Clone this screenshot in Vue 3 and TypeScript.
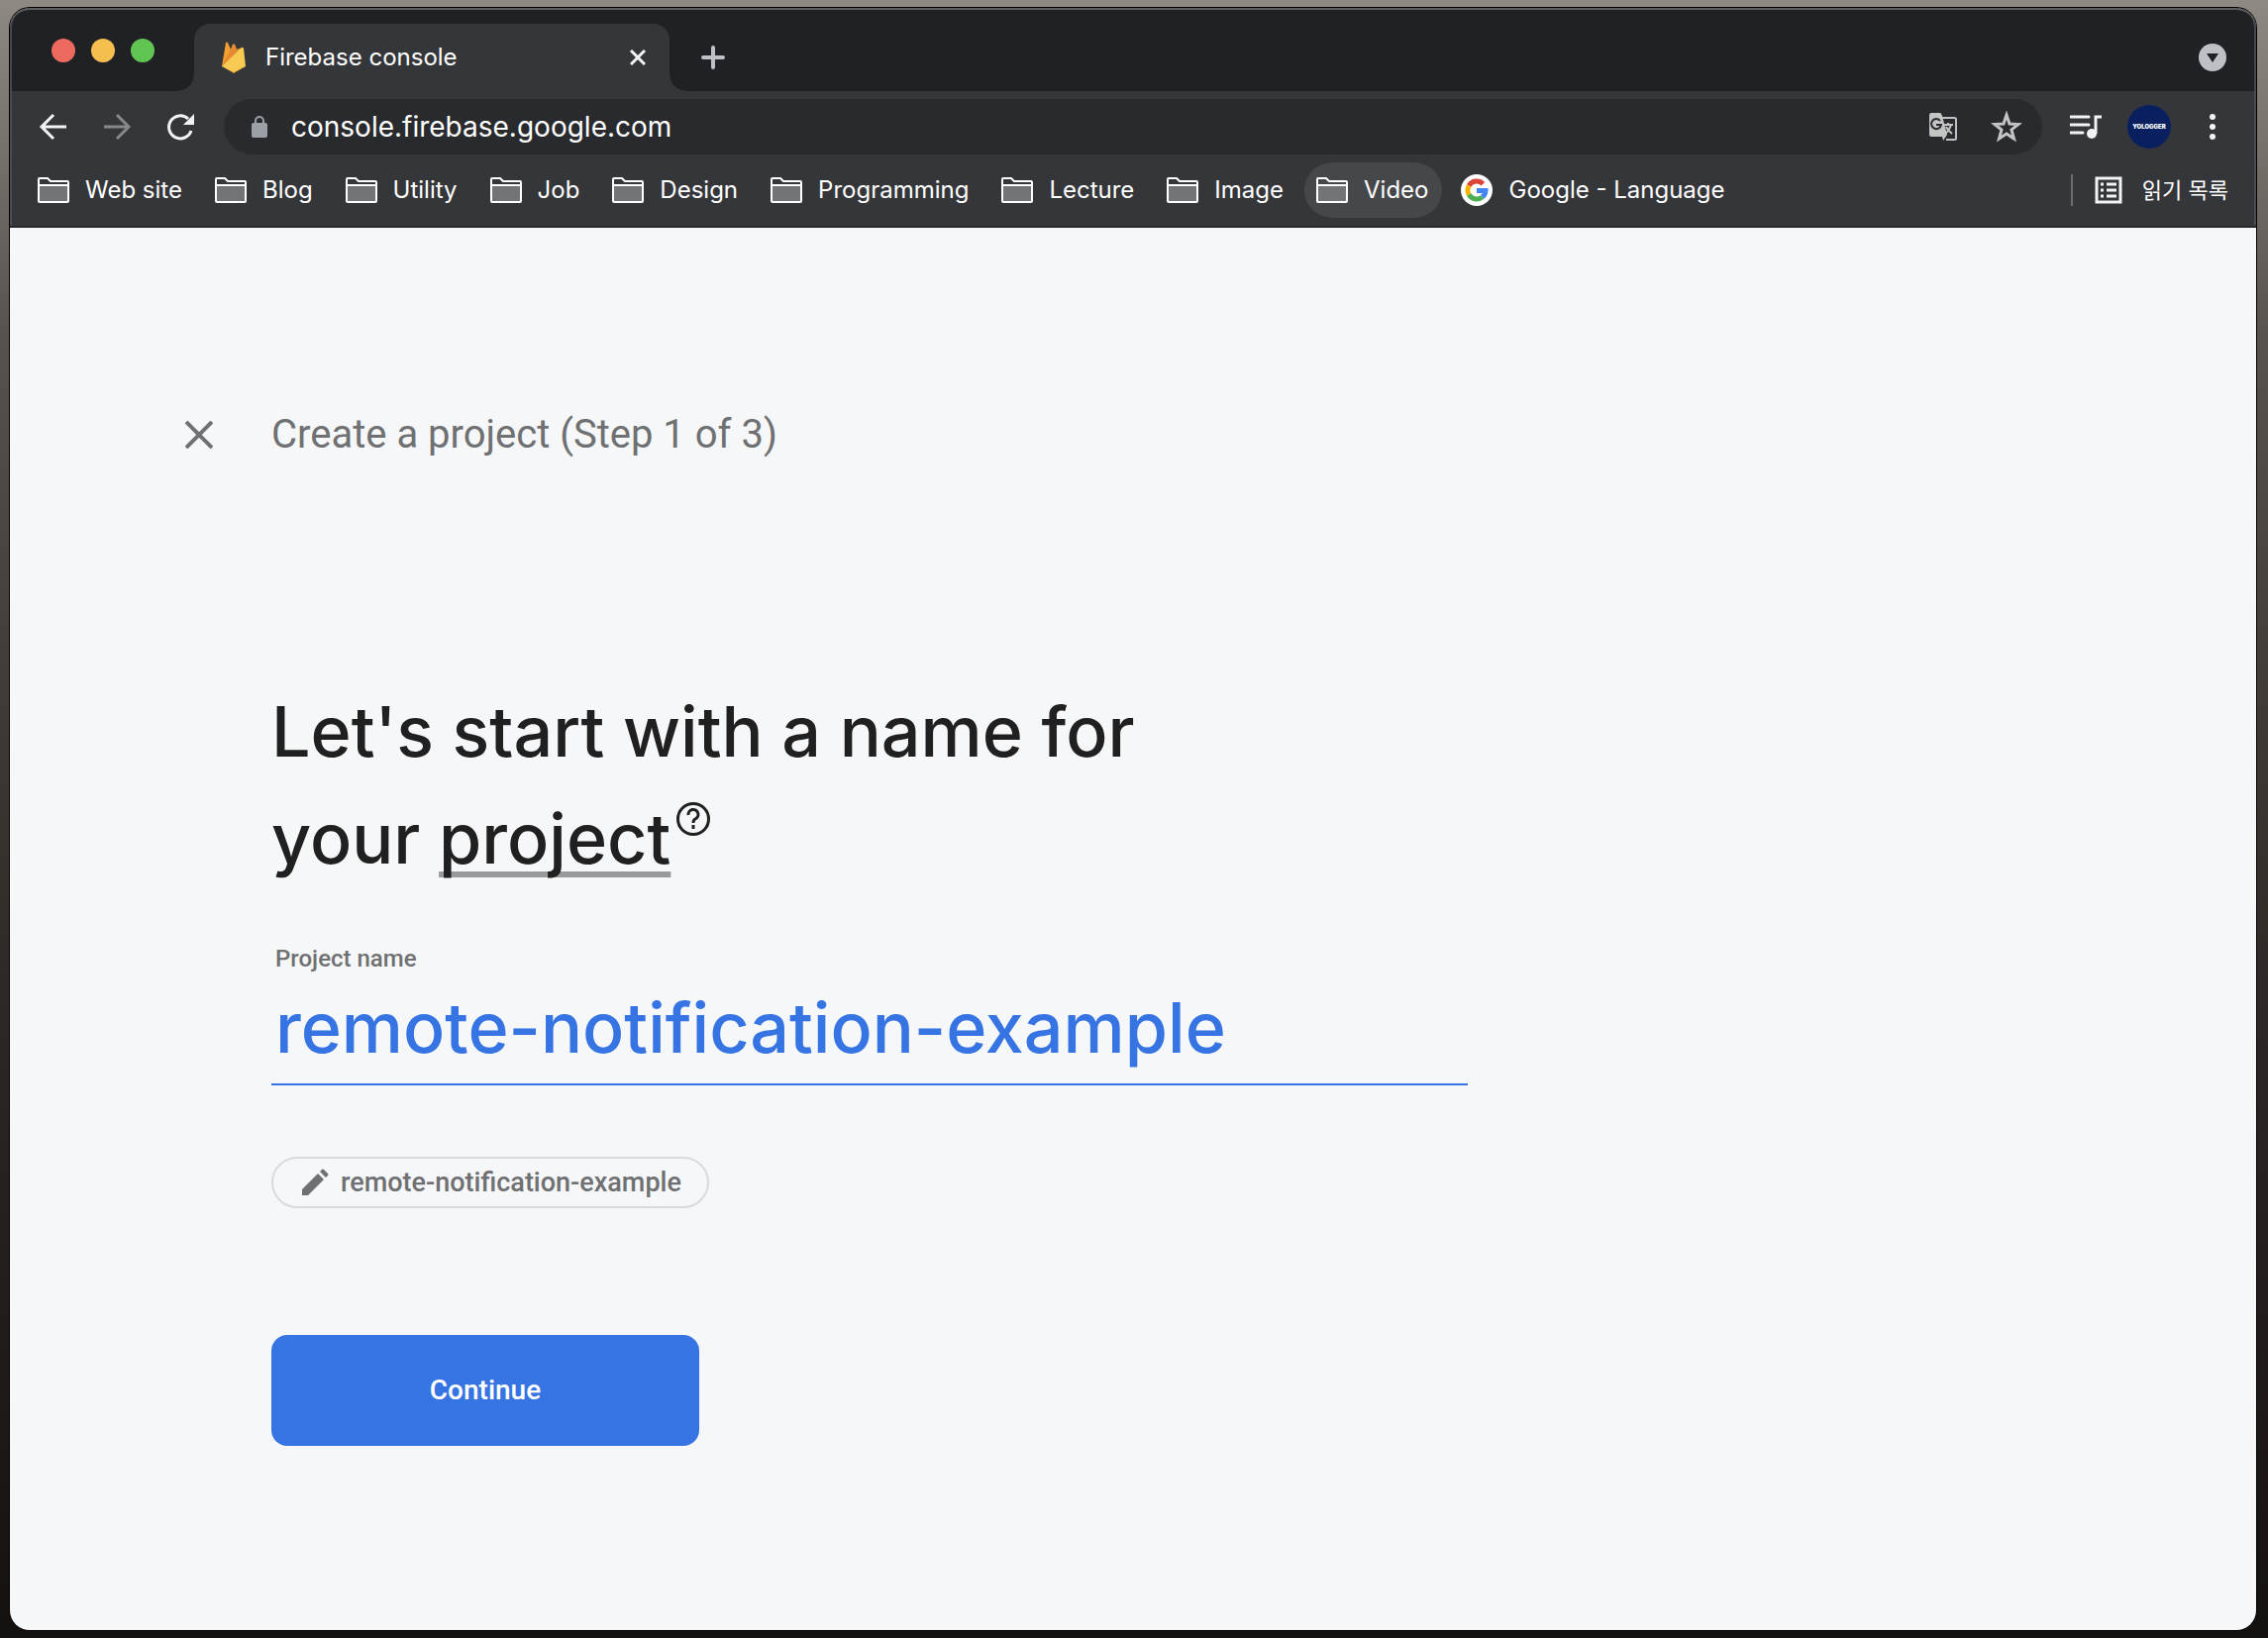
<script setup lang="ts">
import { ref } from 'vue'

const bookmarks: string[] = [
  'Web site',
  'Blog',
  'Utility',
  'Job',
  'Design',
  'Programming',
  'Lecture',
  'Image',
  'Video',
]
const active = 'Video'
const address = ref('console.firebase.google.com')
const projectName = ref('remote-notification-example')
</script>

<template>
  <div class="desktop">
    <div class="window">
      <header class="chrome">
        <div class="tabstrip">
          <div class="lights">
            <button class="light red" aria-label="Close window"></button>
            <button class="light yellow" aria-label="Minimise window"></button>
            <button class="light green" aria-label="Zoom window"></button>
          </div>
          <div class="tab">
            <svg class="flame" viewBox="0 0 24 32" width="24" height="32" aria-hidden="true">
              <path d="M0 25 4 1Q5 0 6 1L9 8 11 3Q12 2 13 3L15 8 21 6V25Z" fill="#f2a033" />
              <path d="M0 25 9 8 15 17Z" fill="#e2842f" />
              <path d="M9 8 11 3Q12 2 13 3L17 12 0 25Z" fill="#e58a30" />
              <path d="M0 25 20 6Q21 5 22 7L24 25 13 31Q12 32 11 31Z" fill="#f7cb52" />
              <path d="M0 25 11 30Q12 31 13 30L24 25 13 31Q12 32 11 31Z" fill="#eea83a" />
            </svg>
            <span class="tab-title">Firebase console</span>
            <button class="plain" aria-label="Close tab">
              <svg viewBox="0 0 16 16" width="16" height="16">
                <path d="M1 1 15 15M15 1 1 15" stroke="#f1f3f4" stroke-width="3" />
              </svg>
            </button>
          </div>
          <button class="plain new-tab" aria-label="New tab">
            <svg viewBox="0 0 24 24" width="24" height="24">
              <path d="M12 2V22M2 12H22" stroke="#bdc1c6" stroke-width="4" stroke-linecap="round" />
            </svg>
          </button>
          <button class="plain tab-search" aria-label="Search tabs">
            <svg viewBox="0 0 28 28" width="28" height="28">
              <circle cx="14" cy="14" r="14" fill="#bdc1c6" />
              <path d="M8 10H20L14 19Z" fill="#202124" />
            </svg>
          </button>
        </div>

        <div class="toolbar">
          <nav class="nav">
            <button class="plain" aria-label="Back">
              <svg viewBox="0 0 32 32" width="32" height="32">
                <path d="M29 16H5M16 4 4 16 16 28" fill="none" stroke="#f1f3f4" stroke-width="3" />
              </svg>
            </button>
            <button class="plain" aria-label="Forward">
              <svg viewBox="0 0 32 32" width="32" height="32">
                <path d="M3 16H27M16 4 28 16 16 28" fill="none" stroke="#87888b" stroke-width="3" />
              </svg>
            </button>
            <button class="plain" aria-label="Reload">
              <svg viewBox="0 0 32 32" width="32" height="32">
                <path d="M27 20A11.500 11.500 0 1 1 24 8" fill="none" stroke="#f1f3f4" stroke-width="3" />
                <path d="M30 3V14H19Z" fill="#f1f3f4" />
              </svg>
            </button>
          </nav>
          <div class="omnibox">
            <svg viewBox="0 0 16 22" width="16" height="22" aria-hidden="true">
              <path d="M4 8V5A4 4 0 0 1 12 5V8" fill="none" stroke="#9aa0a6" stroke-width="2" />
              <rect y="7" width="16" height="15" rx="2" fill="#9aa0a6" />
            </svg>
            <input v-model="address" class="address" aria-label="Address" />
            <button class="plain" aria-label="Translate this page">
              <svg viewBox="0 0 28 28" width="28" height="28">
                <path d="M13 5H25.500Q27 5 27 6.500V25.500Q27 27 25.500 27H17" fill="none" stroke="#bdc1c6" stroke-width="2" />
                <path d="M2 0H11Q12 0 13 3L18 22 14 28 13 24H2Q0 24 0 22V2Q0 0 2 0Z" fill="#c4c4c4" />
                <path d="M11 8A5 5 0 1 0 12 12H7" fill="none" stroke="#292a2d" stroke-width="2" />
                <path d="M15 12H24M19 10V12M22 12Q20 18 16 21M17 14Q19 18 23 21" fill="none" stroke="#c4c4c4" stroke-width="2" />
              </svg>
            </button>
            <button class="plain" aria-label="Bookmark this tab">
              <svg viewBox="0 0 32 32" width="32" height="32">
                <path d="M16 4 19 13 28 13.500 21 19 23.500 28 16 23 8.500 28 11 19 4 13.500 13 13Z" fill="none" stroke="#c4c4c4" stroke-width="3" />
              </svg>
            </button>
          </div>
          <div class="actions">
            <button class="plain" aria-label="Media controls">
              <svg viewBox="0 0 32 26" width="32" height="26">
                <path d="M1 3H19M1 11H19M1 19H13" stroke="#f1f3f4" stroke-width="3" stroke-linecap="round" />
                <path d="M26 20V3H32" fill="none" stroke="#f1f3f4" stroke-width="3" />
                <circle cx="22" cy="20" r="5" fill="#f1f3f4" />
              </svg>
            </button>
            <button class="avatar" aria-label="Profile">YOLOGGER</button>
            <button class="plain menu" aria-label="Menu">
              <svg viewBox="0 0 8 28" width="8" height="28">
                <circle cx="4" cy="4" r="3" fill="#f1f3f4" />
                <circle cx="4" cy="14" r="3" fill="#f1f3f4" />
                <circle cx="4" cy="24" r="3" fill="#f1f3f4" />
              </svg>
            </button>
          </div>
        </div>

        <div class="bookmarks">
          <button v-for="name in bookmarks" :key="name" class="bookmark" :class="{ active: name === active }">
            <svg viewBox="0 0 32 26" width="32" height="26" aria-hidden="true">
              <path d="M1 8H31V24H1Z" fill="#737476" />
              <path d="M1 24V2Q1 1 2 1H10L13 4H30Q31 4 31 5V24Q31 25 30 25H2Q1 25 1 24ZM1 8H31" fill="none" stroke="#fff" stroke-width="2" />
            </svg>
            <span>{{ name }}</span>
          </button>
          <button class="bookmark">
            <svg viewBox="0 0 32 32" width="32" height="32" aria-hidden="true">
              <circle cx="16" cy="16" r="16" fill="#fff" />
              <g fill="none" stroke-width="5">
                <path d="M22.400 9.700A9 9 0 0 0 8.200 11.500" stroke="#db4437" />
                <path d="M8.200 11.500A9 9 0 0 0 8.200 20.500" stroke="#f4b400" />
                <path d="M8.200 20.500A9 9 0 0 0 21.800 22.900" stroke="#4caf50" />
                <path d="M21.800 22.900A9 9 0 0 0 25 16.500H16" stroke="#4285f4" />
              </g>
            </svg>
            <span>Google - Language</span>
          </button>
          <div class="reading">
            <button class="bookmark">
              <svg viewBox="0 0 28 28" width="28" height="28" aria-hidden="true">
                <path d="M2 2H26V26H2Z" fill="none" stroke="#f1f3f4" stroke-width="3" />
                <path d="M6 8H9M6 14H9M6 20H9M12 8H22M12 14H22M12 20H22" stroke="#f1f3f4" stroke-width="3" />
              </svg>
              <span>읽기 목록</span>
            </button>
          </div>
        </div>
      </header>

      <main class="page">
        <div class="step">
          <button class="plain" aria-label="Close">
            <svg viewBox="0 0 28 28" width="28" height="28">
              <path d="M1 1 27 27M27 1 1 27" stroke="#6f7071" stroke-width="4" />
            </svg>
          </button>
          <span>Create a project (Step 1 of 3)</span>
        </div>

        <form class="form" @submit.prevent>
          <h1>
            Let's start with a name for<br />your <span class="term">project</span><svg class="help" viewBox="0 0 34 34" width="34" height="34" aria-hidden="true">
              <circle cx="17" cy="17" r="15.500" fill="none" stroke="#202020" stroke-width="3" />
              <path d="M12 13A5 5 0 1 1 19 17Q17 18 17 21" fill="none" stroke="#202020" stroke-width="3" />
              <path d="M17 23V27" stroke="#202020" stroke-width="3" />
            </svg>
          </h1>
          <label for="project-name">Project name</label>
          <input id="project-name" v-model="projectName" class="name" />
          <button type="button" class="chip">
            <svg viewBox="0 0 28 28" width="28" height="28" aria-hidden="true">
              <path d="M1 27V21L17 5 23 11 7 27ZM19 3 21 1Q22 0 23 1L27 5Q28 6 27 7L25 9Z" fill="#6f7071" />
            </svg>
            <span>{{ projectName }}</span>
          </button>
          <button type="submit" class="continue">Continue</button>
        </form>
      </main>
    </div>
  </div>
</template>

<style>
body {
  margin: 0;
}
</style>

<style scoped>
* {
  box-sizing: border-box;
}
button {
  padding: 0;
  border: 0;
  background: none;
  color: inherit;
  font: inherit;
}
svg {
  display: block;
  flex: none;
}
.desktop {
  display: flex;
  min-height: 100vh;
  padding: 8px 12px 8px 10px;
  background: linear-gradient(#8f8984, #59534f 20%, #2e2926 60%, #15110f);
}
.window {
  display: flex;
  flex: 1;
  flex-direction: column;
  min-width: 0;
  overflow: hidden;
  border-radius: 20px;
  background: #f6f7f9;
  box-shadow: 0 0 0 1px #000;
  font-family: Inter, "Noto Sans CJK KR", sans-serif;
}
.chrome {
  border-bottom: 2px solid #28292b;
  border-radius: 20px 20px 0 0;
  background: #35363a;
  color: #fff;
  font-size: 24px;
  line-height: 32px;
  box-shadow: inset 2px 0 #4b4c4f, inset -2px 0 #4b4c4f;
}
.tabstrip {
  display: flex;
  align-items: center;
  height: 84px;
  padding: 16px 30px 0 42px;
  border-radius: 20px 20px 0 0;
  background: #202124;
  box-shadow: inset 0 2px #5d5e60, inset 2px 0 #46474a, inset -2px 0 #46474a;
}
.lights {
  display: flex;
  gap: 16px;
  width: 144px;
  padding-bottom: 14px;
}
.light {
  width: 24px;
  height: 24px;
  border-radius: 50%;
}
.red {
  background: #ed6a5e;
}
.yellow {
  background: #f5bf4f;
}
.green {
  background: #61c554;
}
.tab {
  position: relative;
  display: flex;
  align-items: center;
  gap: 20px;
  width: 480px;
  height: 68px;
  padding: 0 24px 0 28px;
  border-radius: 16px 16px 0 0;
  background: #35363a;
}
.tab::before,
.tab::after {
  content: "";
  position: absolute;
  bottom: 0;
  width: 16px;
  height: 16px;
}
.tab::before {
  right: 100%;
  background: radial-gradient(circle at 0 0, #202124 15px, #35363a 16px);
}
.tab::after {
  left: 100%;
  background: radial-gradient(circle at 100% 0, #202124 15px, #35363a 16px);
}
.tab-title {
  flex: 1;
}
.new-tab {
  margin-left: 32px;
}
.tab-search {
  margin-left: auto;
}
.toolbar {
  display: flex;
  align-items: center;
  padding: 8px 40px 8px 28px;
}
.nav {
  display: flex;
  gap: 32px;
  width: 188px;
}
.omnibox {
  display: flex;
  flex: 1;
  align-items: center;
  gap: 24px;
  height: 56px;
  padding: 0 20px 0 28px;
  border-radius: 28px;
  background: #292a2d;
}
.omnibox .plain + .plain {
  margin-left: 10px;
}
.address {
  flex: 1;
  min-width: 0;
  padding: 0;
  border: 0;
  outline: 0;
  background: none;
  color: #fff;
  font: 28px/36px Inter, sans-serif;
}
.actions {
  display: flex;
  align-items: center;
  gap: 26px;
  margin-left: 28px;
}
.menu {
  padding-left: 12px;
}
.avatar {
  width: 44px;
  height: 44px;
  border-radius: 50%;
  background: #08205f;
  font-size: 6px;
  font-weight: 900;
  line-height: 44px;
  text-align: center;
}
.bookmarks {
  display: flex;
  align-items: center;
  gap: 7px;
  padding: 0 14px 8px 16px;
}
.bookmark {
  display: flex;
  align-items: center;
  gap: 16px;
  height: 56px;
  padding: 0 14px 0 12px;
  border-radius: 28px;
  white-space: nowrap;
}
.active {
  background: #46474b;
}
.reading {
  display: flex;
  align-items: center;
  margin-left: auto;
  font-size: 22px;
}
.reading .bookmark {
  gap: 20px;
}
.reading::before {
  content: "";
  width: 2px;
  height: 32px;
  margin-right: 10px;
  background: #6b6c6f;
}
.page {
  flex: 1;
  padding: 181px 177px 48px;
}
.step {
  display: flex;
  align-items: center;
  gap: 59px;
  color: #6f7071;
  font: 40px/56px Roboto, sans-serif;
}
.form {
  display: flex;
  flex-direction: column;
  align-items: flex-start;
  max-width: 1295px;
  margin-top: 218px;
  padding-left: 87px;
  color: #6f7071;
  font: 500 27px/32px Roboto, sans-serif;
}
h1 {
  margin: 0;
  color: #202020;
  font: 500 70px/108px Inter, sans-serif;
}
.term {
  text-decoration: underline;
  text-decoration-color: #999a9b;
  text-decoration-skip-ink: none;
  text-decoration-thickness: 6px;
  text-underline-offset: 8px;
}
.help {
  display: inline-block;
  margin-left: 6px;
  vertical-align: 28px;
}
label {
  margin-top: 51px;
  padding-left: 4px;
  font-size: 24px;
}
.name {
  width: 100%;
  height: 112px;
  padding: 0 4px 4px;
  border: 0;
  border-bottom: 2px solid #3574e2;
  outline: 0;
  background: none;
  color: #3574e2;
  font: 500 70px/104px Inter, sans-serif;
}
.chip {
  display: flex;
  align-items: center;
  gap: 12px;
  height: 52px;
  margin-top: 72px;
  padding: 0 26px 0 28px;
  border: 2px solid #d9dadc;
  border-radius: 26px;
}
.continue {
  width: 432px;
  height: 112px;
  margin-top: 128px;
  border-radius: 16px;
  background: #3574e2;
  color: #fff;
  font-size: 28px;
}
</style>
